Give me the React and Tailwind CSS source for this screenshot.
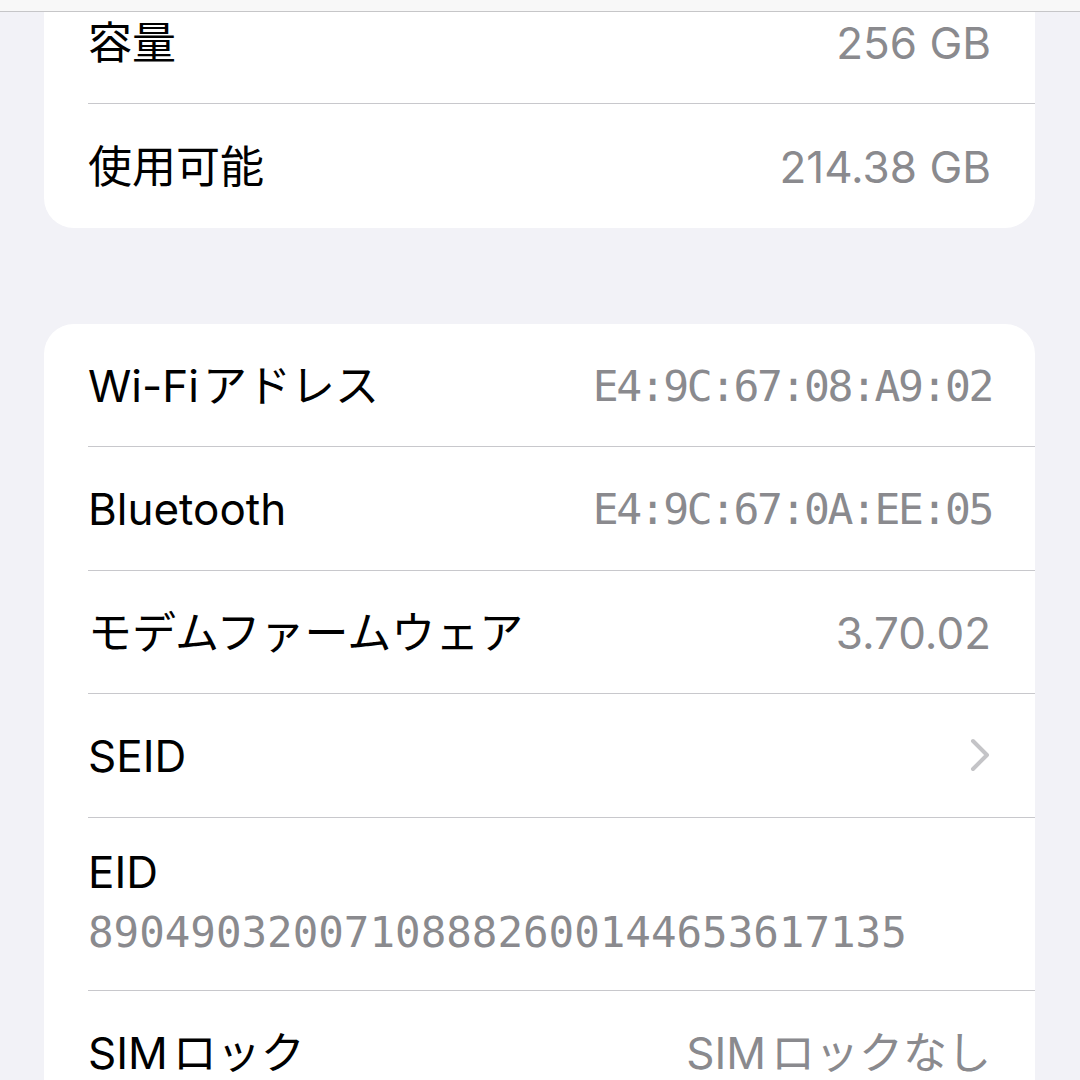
import React from "react";

const sans = "font-['Inter','Noto_Sans_CJK_JP',sans-serif]";
const mono = "font-['DejaVu_Sans_Mono','Liberation_Mono',monospace]";

function Chevron() {
  return (
    <svg width="20" height="34" viewBox="0 0 20 34" fill="none">
      <path d="M3 3 L17 17 L3 31" stroke="#c4c4c7" strokeWidth="4" strokeLinecap="round" strokeLinejoin="round" />
    </svg>
  );
}

function Row({ label, value, valueMono, chevron, last }) {
  return (
    <div className={"ml-[44px] h-[123.5px] flex items-center justify-between pr-[44px] " + (last ? "" : "border-b border-[#c8c8cc]")}>
      <span className="text-[44px] leading-[52px] text-black pt-[2px]">{label}</span>
      {chevron ? (
        <span className="mr-[1px]">
          <Chevron />
        </span>
      ) : valueMono ? (
        <span className={mono + " text-[43px] leading-[52px] tracking-[-2.4px] mr-[-1px] text-[#8a8a8e] pt-[2px]"}>{value}</span>
      ) : (
        <span className="text-[44px] leading-[52px] text-[#8a8a8e] pt-[2px]">{value}</span>
      )}
    </div>
  );
}

export default function App() {
  return (
    <div className={"relative w-[1080px] h-[1080px] overflow-hidden bg-[#f2f2f7] " + sans}>
      <div className="flex flex-col pl-[44px] pr-[45px] mt-[-19.5px]">
        <div className="bg-white rounded-[30px] overflow-hidden">
          <Row label="容量" value="256 GB" />
          <Row label="使用可能" value="214.38 GB" last />
        </div>
        <div className="h-[96px]" />
        <div className="bg-white rounded-[30px] overflow-hidden">
          <Row
            label={
              <>
                Wi-Fi<span className="ml-[4px]">アドレス</span>
              </>
            }
            value="E4:9C:67:08:A9:02"
            valueMono
          />
          <Row label="Bluetooth" value="E4:9C:67:0A:EE:05" valueMono />
          <Row label="モデムファームウェア" value="3.70.02" />
          <Row label="SEID" chevron />
          <div className="ml-[44px] h-[173px] border-b border-[#c8c8cc] flex flex-col pt-[28px]">
            <span className="text-[44px] leading-[52px] text-black">EID</span>
            <span className={mono + " mt-[9px] text-[42.5px] leading-[52px] text-[#8a8a8e]"}>
              89049032007108882600144653617135
            </span>
          </div>
          <Row
            label={
              <>
                SIM<span className="ml-[5px]">ロック</span>
              </>
            }
            value={
              <>
                SIM<span className="ml-[5px]">ロックなし</span>
              </>
            }
            last
          />
        </div>
      </div>
      <div className="absolute top-0 left-0 right-0 h-[12px] bg-[#f8f8f8]/95 border-b border-[#c6c6c8]" />
    </div>
  );
}
